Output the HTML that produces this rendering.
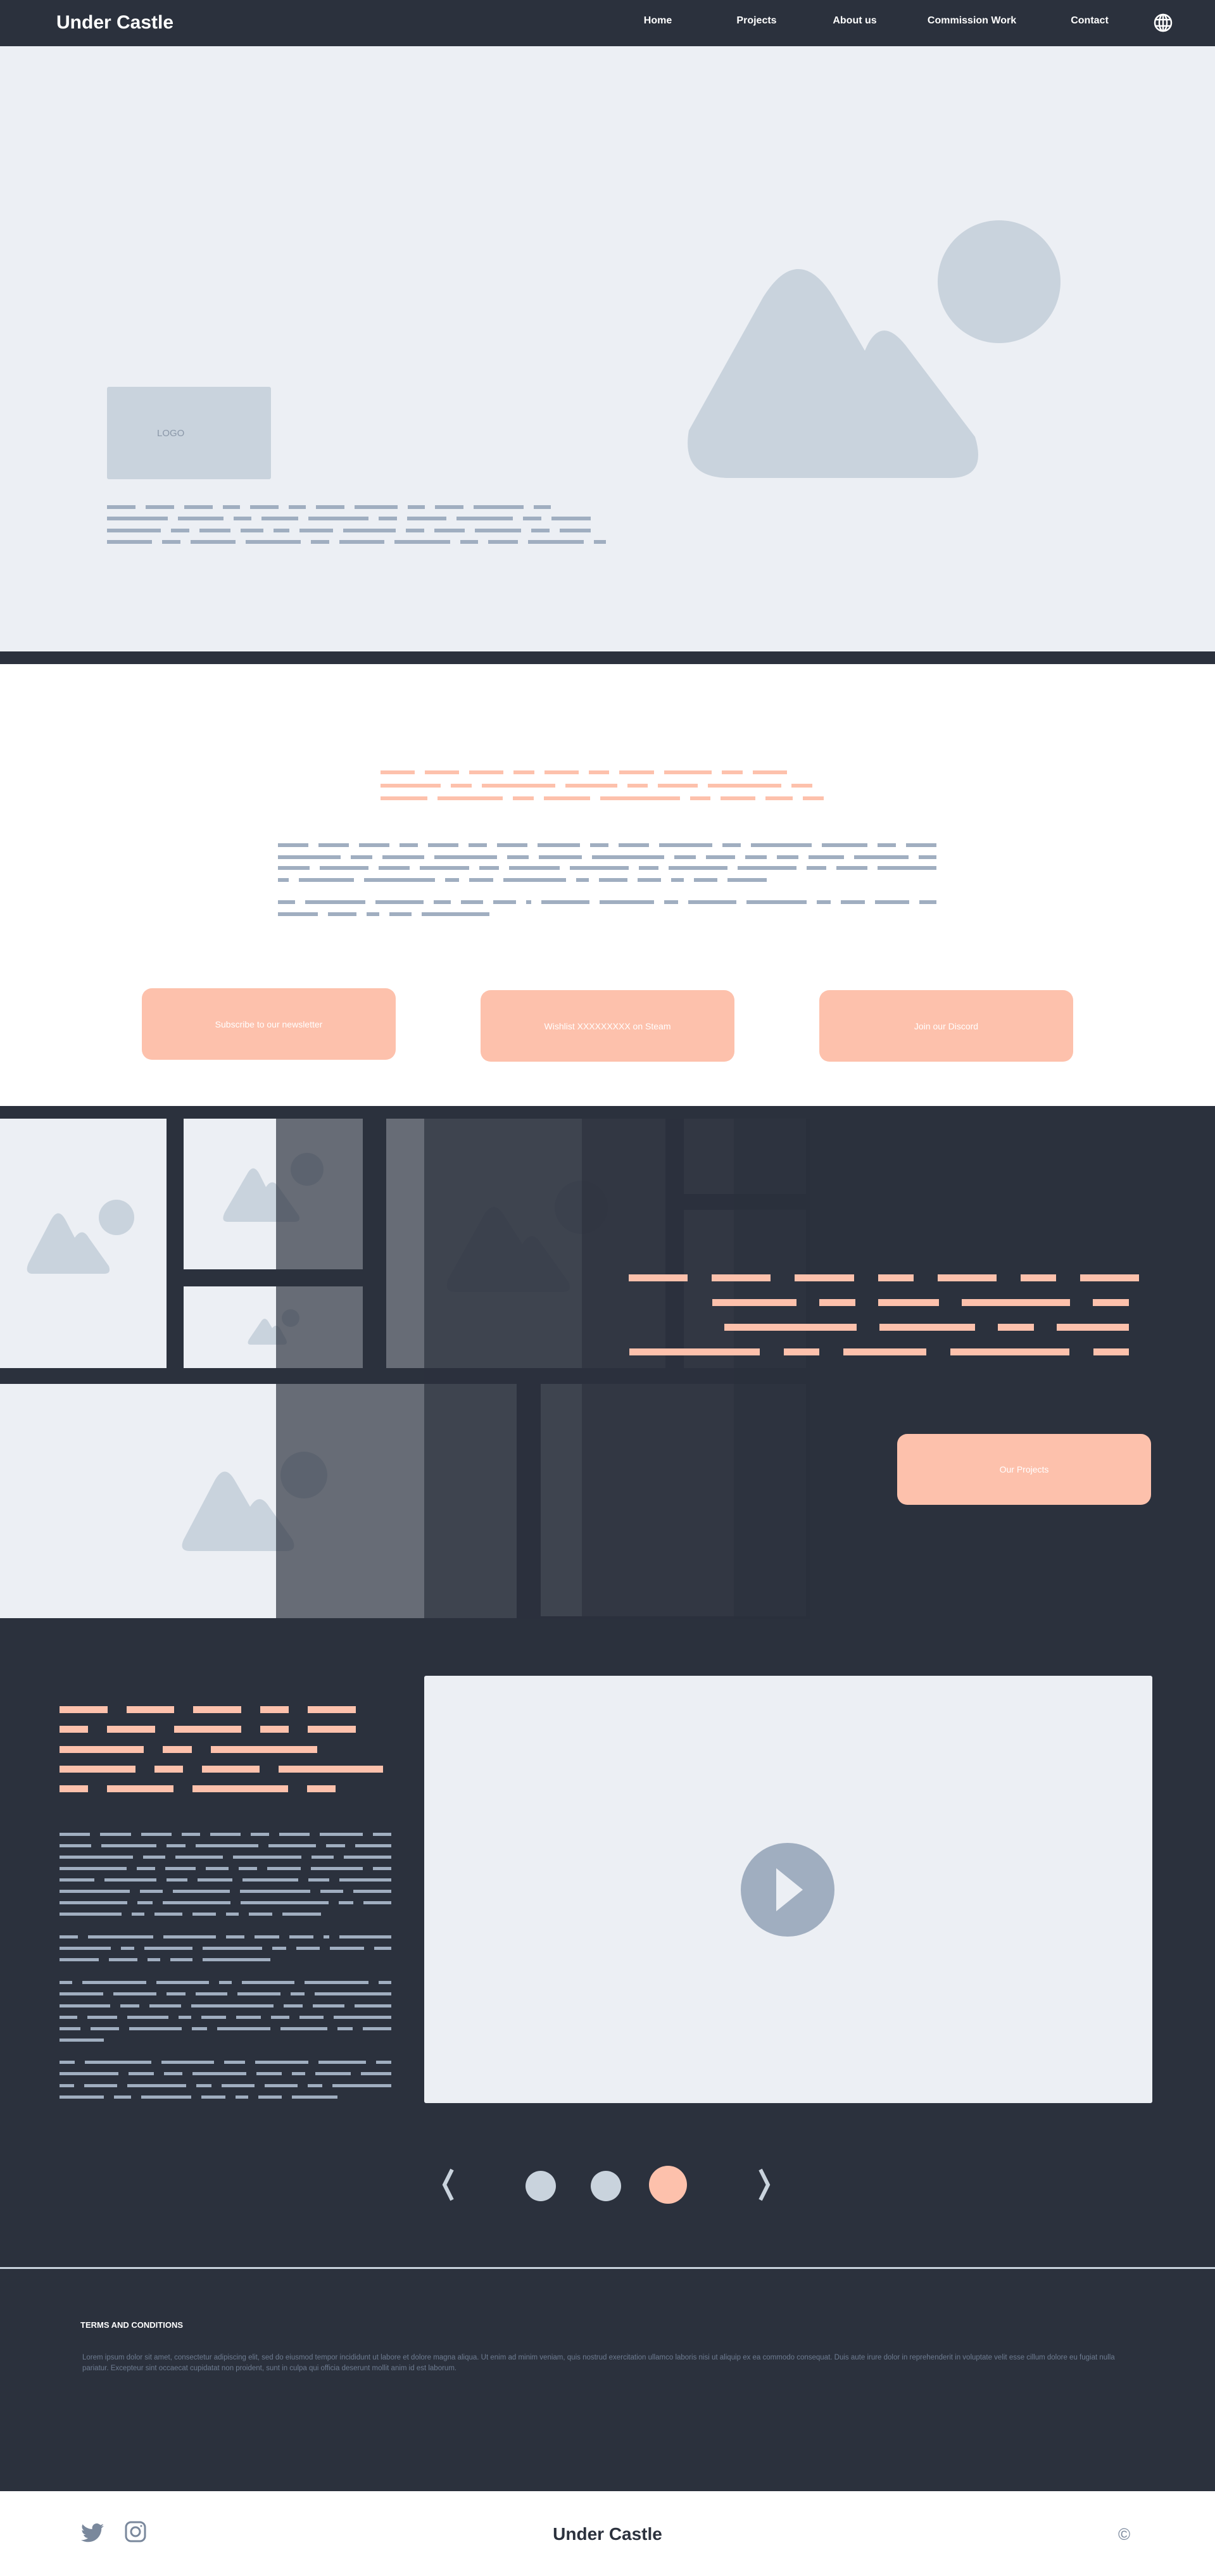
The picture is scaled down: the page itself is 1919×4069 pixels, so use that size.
<!DOCTYPE html>
<html><head><meta charset="utf-8"><style>
*{margin:0;padding:0;box-sizing:border-box}
body{width:1919px;height:4069px;position:relative;background:#2b313d;font-family:"Liberation Sans",sans-serif;overflow:hidden}
.a{position:absolute}
.ln{position:absolute;display:flex;gap:16px}
.ln i{display:block;height:100%;flex:1}
.g i{background:#a0aec0}.s i{background:#fdc1ac}
.btn{position:absolute;background:#fdc1ac;border-radius:16px;color:#fff;font-size:14px;display:flex;align-items:center;justify-content:center}
.nav{position:absolute;top:24px;color:#fff;font-weight:bold;font-size:16px;transform:translateX(-50%)}
</style></head><body>
<!-- nav -->
<div class="a" style="left:0;top:0;width:1919px;height:73px;background:#2b313d"></div>
<div class="a" style="left:89px;top:19px;color:#fff;font-weight:bold;font-size:30px">Under Castle</div>
<div class="nav" style="left:1039px">Home</div>
<div class="nav" style="left:1195px">Projects</div>
<div class="nav" style="left:1350px">About us</div>
<div class="nav" style="left:1535px">Commission Work</div>
<div class="nav" style="left:1721px">Contact</div>
<svg class="a" style="left:1821px;top:20px" width="32" height="32" viewBox="0 0 32 32" fill="none" stroke="#fff" stroke-width="2.5"><circle cx="16" cy="16" r="13"/><ellipse cx="16" cy="16" rx="6" ry="13"/><line x1="3" y1="11" x2="29" y2="11"/><line x1="3" y1="21" x2="29" y2="21"/><line x1="16" y1="3" x2="16" y2="29"/></svg>
<!-- hero -->
<div class="a" style="left:0;top:73px;width:1919px;height:956px;background:#eceff4"></div>
<div class="a" style="left:169px;top:611px;width:259px;height:146px;background:#c9d3dd;border-radius:3px"></div>
<div class="a" style="left:248px;top:676px;color:#8a97a8;font-size:15px">LOGO</div>
<svg class="a" style="left:0;top:0" width="1919" height="1029"><circle cx="1578" cy="445" r="97" fill="#c9d3dd"/><path d="M1152 755 Q1075 755 1088 680 L1205 470 Q1261 380 1317 470 L1366 554 Q1390 495 1430 545 L1540 690 Q1560 755 1500 755 Z" fill="#c9d3dd"/></svg>
<div class="ln g" style="left:169px;top:798px;width:701px;height:6px"><i style="flex:2"></i><i style="flex:2"></i><i style="flex:2"></i><i style="flex:1.2"></i><i style="flex:2"></i><i style="flex:1.2"></i><i style="flex:2"></i><i style="flex:3"></i><i style="flex:1.2"></i><i style="flex:2"></i><i style="flex:3.5"></i><i style="flex:1.2"></i></div>
<div class="ln g" style="left:169px;top:816px;width:764px;height:6px"><i style="flex:4"></i><i style="flex:3"></i><i style="flex:1.2"></i><i style="flex:2.4"></i><i style="flex:4"></i><i style="flex:1.2"></i><i style="flex:2.6"></i><i style="flex:3.7"></i><i style="flex:1.2"></i><i style="flex:2.6"></i></div>
<div class="ln g" style="left:169px;top:835px;width:764px;height:6px"><i style="flex:3.5"></i><i style="flex:1.2"></i><i style="flex:2"></i><i style="flex:1.5"></i><i style="flex:1"></i><i style="flex:2.2"></i><i style="flex:3.4"></i><i style="flex:1.2"></i><i style="flex:2"></i><i style="flex:3"></i><i style="flex:1.2"></i><i style="flex:2"></i></div>
<div class="ln g" style="left:169px;top:853px;width:788px;height:6px"><i style="flex:3"></i><i style="flex:1.2"></i><i style="flex:3"></i><i style="flex:3.7"></i><i style="flex:1.2"></i><i style="flex:3"></i><i style="flex:3.7"></i><i style="flex:1.2"></i><i style="flex:2"></i><i style="flex:3.7"></i><i style="flex:.8"></i></div>
<!-- white section -->
<div class="a" style="left:0;top:1049px;width:1919px;height:698px;background:#fff"></div>
<div class="ln s" style="left:601px;top:1217px;width:642px;height:6px"><i style="flex:2"></i><i style="flex:2"></i><i style="flex:2"></i><i style="flex:1.2"></i><i style="flex:2"></i><i style="flex:1.2"></i><i style="flex:2"></i><i style="flex:2.8"></i><i style="flex:1.2"></i><i style="flex:2"></i></div>
<div class="ln s" style="left:601px;top:1238px;width:682px;height:6px"><i style="flex:3.5"></i><i style="flex:1.2"></i><i style="flex:4.3"></i><i style="flex:3"></i><i style="flex:1.2"></i><i style="flex:2.3"></i><i style="flex:4.3"></i><i style="flex:1.2"></i></div>
<div class="ln s" style="left:601px;top:1258px;width:700px;height:6px"><i style="flex:2.7"></i><i style="flex:3.8"></i><i style="flex:1.2"></i><i style="flex:2.7"></i><i style="flex:4.6"></i><i style="flex:1.2"></i><i style="flex:2"></i><i style="flex:1.6"></i><i style="flex:1.2"></i></div>
<div class="ln g" style="left:439px;top:1332px;width:1040px;height:6px"><i style="flex:2"></i><i style="flex:2"></i><i style="flex:2"></i><i style="flex:1.2"></i><i style="flex:2"></i><i style="flex:1.2"></i><i style="flex:2"></i><i style="flex:2.8"></i><i style="flex:1.2"></i><i style="flex:2"></i><i style="flex:3.5"></i><i style="flex:1.2"></i><i style="flex:4"></i><i style="flex:3"></i><i style="flex:1.2"></i><i style="flex:2"></i></div>
<div class="ln g" style="left:439px;top:1351px;width:1040px;height:6px"><i style="flex:3.5"></i><i style="flex:1.2"></i><i style="flex:2.3"></i><i style="flex:3.5"></i><i style="flex:1.2"></i><i style="flex:2.4"></i><i style="flex:4"></i><i style="flex:1.2"></i><i style="flex:1.6"></i><i style="flex:1.2"></i><i style="flex:1.2"></i><i style="flex:2"></i><i style="flex:3"></i><i style="flex:1"></i></div>
<div class="ln g" style="left:439px;top:1368px;width:1040px;height:6px"><i style="flex:1.6"></i><i style="flex:2.5"></i><i style="flex:1.6"></i><i style="flex:2.5"></i><i style="flex:1"></i><i style="flex:2.6"></i><i style="flex:3"></i><i style="flex:1"></i><i style="flex:3"></i><i style="flex:3"></i><i style="flex:1"></i><i style="flex:1.6"></i><i style="flex:3"></i></div>
<div class="ln g" style="left:439px;top:1387px;width:772px;height:6px"><i style="flex:.7"></i><i style="flex:3.5"></i><i style="flex:4.5"></i><i style="flex:.9"></i><i style="flex:1.5"></i><i style="flex:4"></i><i style="flex:.8"></i><i style="flex:1.8"></i><i style="flex:1.5"></i><i style="flex:.8"></i><i style="flex:1.5"></i><i style="flex:2.5"></i></div>
<div class="ln g" style="left:439px;top:1422px;width:1040px;height:6px"><i style="flex:1"></i><i style="flex:3.5"></i><i style="flex:2.8"></i><i style="flex:1"></i><i style="flex:1.3"></i><i style="flex:1.3"></i><i style="flex:.3"></i><i style="flex:2.8"></i><i style="flex:3.2"></i><i style="flex:.8"></i><i style="flex:2.8"></i><i style="flex:3.5"></i><i style="flex:.8"></i><i style="flex:1.4"></i><i style="flex:2"></i><i style="flex:1"></i></div>
<div class="ln g" style="left:439px;top:1441px;width:334px;height:6px"><i style="flex:2.5"></i><i style="flex:1.8"></i><i style="flex:.8"></i><i style="flex:1.4"></i><i style="flex:4.3"></i></div>
<div class="btn" style="left:224px;top:1561px;width:401px;height:113px">Subscribe to our newsletter</div>
<div class="btn" style="left:759px;top:1564px;width:401px;height:113px">Wishlist XXXXXXXXX on Steam</div>
<div class="btn" style="left:1294px;top:1564px;width:401px;height:113px">Join our Discord</div>
<!-- gallery -->
<svg class="a" style="left:0;top:1747px" width="1919" height="840" viewBox="0 1747 1919 840">
<g fill="#eceff4">
<rect x="0" y="1767" width="263" height="394"/>
<rect x="290" y="1767" width="283" height="238"/>
<rect x="290" y="2032" width="283" height="129"/>
<rect x="610" y="1767" width="441" height="394"/>
<rect x="1080" y="1767" width="193" height="119"/>
<rect x="1080" y="1911" width="193" height="250"/>
<rect x="0" y="2186" width="816" height="370"/>
<rect x="854" y="2186" width="419" height="367"/>
</g>
<g fill="#c9d3dd">
<circle cx="184" cy="1923" r="28"/><path d="M52 2012 Q38 2012 45 1995 L80 1928 Q92 1905 104 1928 L118 1955 Q130 1938 140 1955 L172 2000 Q176 2012 165 2012Z"/>
<circle cx="485" cy="1847" r="26"/><path d="M360 1930 Q348 1930 355 1915 L390 1855 Q400 1836 410 1855 L420 1875 Q430 1860 440 1875 L472 1920 Q476 1930 465 1930Z"/>
<circle cx="459" cy="2082" r="14"/><path d="M396 2124 Q389 2124 393 2116 L412 2088 Q418 2078 424 2088 L430 2098 Q436 2090 442 2098 L452 2116 Q455 2124 448 2124Z"/>
<circle cx="918" cy="1907" r="42"/><path d="M720 2041 Q700 2041 708 2020 L765 1918 Q780 1895 795 1918 L825 1965 Q840 1940 855 1965 L898 2025 Q905 2041 888 2041Z"/>
<circle cx="480" cy="2330" r="37"/><path d="M300 2450 Q282 2450 290 2432 L340 2337 Q355 2312 370 2337 L395 2380 Q410 2356 425 2380 L462 2432 Q470 2450 452 2450Z"/>
</g>
<g fill="#2b313d">
<rect x="436" y="1767" width="234" height="790" opacity=".69"/>
<rect x="670" y="1767" width="249" height="790" opacity=".9"/>
<rect x="919" y="1767" width="240" height="790" opacity=".97"/>
<rect x="1159" y="1767" width="120" height="790" opacity=".99"/>
</g>
</svg>
<div class="ln s" style="left:993px;top:2013px;width:806px;height:11px;gap:38px"><i style="flex:2"></i><i style="flex:2"></i><i style="flex:2"></i><i style="flex:1.2"></i><i style="flex:2"></i><i style="flex:1.2"></i><i style="flex:2"></i></div>
<div class="ln s" style="left:1125px;top:2052px;width:658px;height:11px;gap:36px"><i style="flex:2.8"></i><i style="flex:1.2"></i><i style="flex:2"></i><i style="flex:3.6"></i><i style="flex:1.2"></i></div>
<div class="ln s" style="left:1144px;top:2091px;width:639px;height:11px;gap:36px"><i style="flex:4.4"></i><i style="flex:3.2"></i><i style="flex:1.2"></i><i style="flex:2.4"></i></div>
<div class="ln s" style="left:994px;top:2130px;width:789px;height:11px;gap:38px"><i style="flex:4.4"></i><i style="flex:1.2"></i><i style="flex:2.8"></i><i style="flex:4"></i><i style="flex:1.2"></i></div>
<div class="btn" style="left:1417px;top:2265px;width:401px;height:112px">Our Projects</div>
<!-- video section -->
<div class="a" style="left:670px;top:2647px;width:1150px;height:675px;background:#eceff4;border-radius:3px"></div>
<svg class="a" style="left:1168px;top:2909px" width="152" height="152"><circle cx="76" cy="76" r="74" fill="#a0aec0"/><path d="M58 42 L100 76 L58 110Z" fill="#eceff4"/></svg>
<div class="ln s" style="left:94px;top:2695px;width:468px;height:11px;gap:30px"><i style="flex:2"></i><i style="flex:2"></i><i style="flex:2"></i><i style="flex:1.2"></i><i style="flex:2"></i></div>
<div class="ln s" style="left:94px;top:2726px;width:468px;height:11px;gap:30px"><i style="flex:1.2"></i><i style="flex:2"></i><i style="flex:2.8"></i><i style="flex:1.2"></i><i style="flex:2"></i></div>
<div class="ln s" style="left:94px;top:2758px;width:407px;height:11px;gap:30px"><i style="flex:3.5"></i><i style="flex:1.2"></i><i style="flex:4.4"></i></div>
<div class="ln s" style="left:94px;top:2789px;width:511px;height:11px;gap:30px"><i style="flex:3.2"></i><i style="flex:1.2"></i><i style="flex:2.4"></i><i style="flex:4.4"></i></div>
<div class="ln s" style="left:94px;top:2820px;width:436px;height:11px;gap:30px"><i style="flex:1.2"></i><i style="flex:2.8"></i><i style="flex:4"></i><i style="flex:1.2"></i></div>
<div id="para"></div>
<div class="ln g" style="left:94px;top:2895px;width:524px;height:5px"><i style="flex:2"></i><i style="flex:2"></i><i style="flex:2"></i><i style="flex:1.2"></i><i style="flex:2"></i><i style="flex:1.2"></i><i style="flex:2"></i><i style="flex:2.8"></i><i style="flex:1.2"></i></div>
<div class="ln g" style="left:94px;top:2913px;width:524px;height:5px"><i style="flex:2"></i><i style="flex:3.5"></i><i style="flex:1.2"></i><i style="flex:4"></i><i style="flex:3"></i><i style="flex:1.2"></i><i style="flex:2.3"></i></div>
<div class="ln g" style="left:94px;top:2931px;width:524px;height:5px"><i style="flex:4"></i><i style="flex:1.2"></i><i style="flex:2.6"></i><i style="flex:3.7"></i><i style="flex:1.2"></i><i style="flex:2.6"></i></div>
<div class="ln g" style="left:94px;top:2949px;width:524px;height:5px"><i style="flex:4.4"></i><i style="flex:1.2"></i><i style="flex:2"></i><i style="flex:1.5"></i><i style="flex:1.2"></i><i style="flex:2.2"></i><i style="flex:3.4"></i><i style="flex:1.2"></i></div>
<div class="ln g" style="left:94px;top:2967px;width:524px;height:5px"><i style="flex:2"></i><i style="flex:3"></i><i style="flex:1.2"></i><i style="flex:2"></i><i style="flex:3.2"></i><i style="flex:1.2"></i><i style="flex:3"></i></div>
<div class="ln g" style="left:94px;top:2985px;width:524px;height:5px"><i style="flex:3.7"></i><i style="flex:1.2"></i><i style="flex:3"></i><i style="flex:3.7"></i><i style="flex:1.2"></i><i style="flex:2"></i></div>
<div class="ln g" style="left:94px;top:3003px;width:524px;height:5px"><i style="flex:3.7"></i><i style="flex:.8"></i><i style="flex:3.7"></i><i style="flex:4.8"></i><i style="flex:.8"></i><i style="flex:1.5"></i></div>
<div class="ln g" style="left:94px;top:3021px;width:413px;height:5px"><i style="flex:4"></i><i style="flex:.8"></i><i style="flex:1.8"></i><i style="flex:1.5"></i><i style="flex:.8"></i><i style="flex:1.5"></i><i style="flex:2.5"></i></div>
<div class="ln g" style="left:94px;top:3057px;width:524px;height:5px"><i style="flex:1"></i><i style="flex:3.5"></i><i style="flex:2.8"></i><i style="flex:1"></i><i style="flex:1.3"></i><i style="flex:1.3"></i><i style="flex:.3"></i><i style="flex:2.8"></i></div>
<div class="ln g" style="left:94px;top:3075px;width:524px;height:5px"><i style="flex:3"></i><i style="flex:.8"></i><i style="flex:2.8"></i><i style="flex:3.5"></i><i style="flex:.8"></i><i style="flex:1.4"></i><i style="flex:2"></i><i style="flex:1"></i></div>
<div class="ln g" style="left:94px;top:3093px;width:333px;height:5px"><i style="flex:2.5"></i><i style="flex:1.8"></i><i style="flex:.8"></i><i style="flex:1.4"></i><i style="flex:4.3"></i></div>
<div class="ln g" style="left:94px;top:3129px;width:524px;height:5px"><i style="flex:.8"></i><i style="flex:4"></i><i style="flex:3.3"></i><i style="flex:.8"></i><i style="flex:3.3"></i><i style="flex:4"></i><i style="flex:.8"></i></div>
<div class="ln g" style="left:94px;top:3147px;width:524px;height:5px"><i style="flex:2.5"></i><i style="flex:2.5"></i><i style="flex:1.1"></i><i style="flex:1.8"></i><i style="flex:2.5"></i><i style="flex:.8"></i><i style="flex:4.4"></i></div>
<div class="ln g" style="left:94px;top:3166px;width:524px;height:5px"><i style="flex:2.9"></i><i style="flex:1.1"></i><i style="flex:1.8"></i><i style="flex:4.7"></i><i style="flex:1.1"></i><i style="flex:1.8"></i><i style="flex:2.1"></i></div>
<div class="ln g" style="left:94px;top:3184px;width:524px;height:5px"><i style="flex:1.1"></i><i style="flex:1.8"></i><i style="flex:2.5"></i><i style="flex:.8"></i><i style="flex:1.5"></i><i style="flex:1.5"></i><i style="flex:1.1"></i><i style="flex:1.5"></i><i style="flex:3.5"></i></div>
<div class="ln g" style="left:94px;top:3202px;width:524px;height:5px"><i style="flex:1.1"></i><i style="flex:1.5"></i><i style="flex:2.8"></i><i style="flex:.8"></i><i style="flex:2.8"></i><i style="flex:2.5"></i><i style="flex:.8"></i><i style="flex:1.5"></i></div>
<div class="a" style="left:94px;top:3220px;width:70px;height:5px;background:#a0aec0"></div>
<div class="ln g" style="left:94px;top:3255px;width:524px;height:5px"><i style="flex:.8"></i><i style="flex:3.5"></i><i style="flex:2.8"></i><i style="flex:1.1"></i><i style="flex:2.8"></i><i style="flex:2.5"></i><i style="flex:.8"></i></div>
<div class="ln g" style="left:94px;top:3273px;width:524px;height:5px"><i style="flex:3.5"></i><i style="flex:1.5"></i><i style="flex:1.1"></i><i style="flex:3.2"></i><i style="flex:1.5"></i><i style="flex:.8"></i><i style="flex:2.1"></i><i style="flex:1.8"></i></div>
<div class="ln g" style="left:94px;top:3292px;width:524px;height:5px"><i style="flex:.8"></i><i style="flex:1.8"></i><i style="flex:3.2"></i><i style="flex:.8"></i><i style="flex:1.8"></i><i style="flex:1.8"></i><i style="flex:.8"></i><i style="flex:3.2"></i></div>
<div class="ln g" style="left:94px;top:3310px;width:439px;height:5px"><i style="flex:2.8"></i><i style="flex:1.1"></i><i style="flex:3.2"></i><i style="flex:1.5"></i><i style="flex:.8"></i><i style="flex:1.5"></i><i style="flex:2.9"></i></div>
<!-- carousel -->
<svg class="a" style="left:680px;top:3415px" width="560" height="72" fill="none" stroke="#c9d3dd" stroke-width="6"><path d="M34 12 L22 36 L34 60"/><path d="M521 12 L533 36 L521 60"/><circle cx="174" cy="38" r="24" fill="#c9d3dd" stroke="none"/><circle cx="277" cy="38" r="24" fill="#c9d3dd" stroke="none"/><circle cx="375" cy="36" r="30" fill="#fdc1ac" stroke="none"/></svg>
<!-- terms -->
<div class="a" style="left:0;top:3581px;width:1919px;height:3px;background:#c9d3dd"></div>
<div class="a" style="left:127px;top:3665px;color:#fff;font-weight:bold;font-size:13px">TERMS AND CONDITIONS</div>
<div class="a" style="left:130px;top:3716px;width:1660px;color:#6e7c91;font-size:11.5px;line-height:17px">Lorem ipsum dolor sit amet, consectetur adipiscing elit, sed do eiusmod tempor incididunt ut labore et dolore magna aliqua. Ut enim ad minim veniam, quis nostrud exercitation ullamco laboris nisi ut aliquip ex ea commodo consequat. Duis aute irure dolor in reprehenderit in voluptate velit esse cillum dolore eu fugiat nulla pariatur. Excepteur sint occaecat cupidatat non proident, sunt in culpa qui officia deserunt mollit anim id est laborum.</div>
<!-- footer -->
<div class="a" style="left:0;top:3935px;width:1919px;height:134px;background:#fff"></div>
<svg class="a" style="left:128px;top:3985px" width="36" height="32" viewBox="0 0 24 20"><path fill="#7a889c" d="M24 2.4c-.9.4-1.8.7-2.8.8 1-.6 1.8-1.6 2.2-2.7-1 .6-2 1-3.1 1.2C19.3.7 18 0 16.6 0c-2.7 0-4.9 2.2-4.9 4.9 0 .4 0 .8.1 1.1C7.7 5.8 4.1 3.9 1.7.9c-.4.7-.7 1.6-.7 2.5 0 1.7.9 3.2 2.2 4.1-.8 0-1.6-.2-2.2-.6v.1c0 2.4 1.7 4.4 3.9 4.8-.4.1-.8.2-1.3.2-.3 0-.6 0-.9-.1.6 2 2.4 3.4 4.6 3.4-1.7 1.3-3.8 2.1-6.1 2.1-.4 0-.8 0-1.2-.1 2.2 1.4 4.8 2.2 7.5 2.2 9.1 0 14-7.5 14-14v-.6c1-.7 1.8-1.6 2.5-2.5z"/></svg>
<svg class="a" style="left:196px;top:3981px" width="36" height="36" viewBox="0 0 36 36" fill="none" stroke="#7a889c" stroke-width="3"><rect x="3" y="3" width="30" height="30" rx="8"/><circle cx="18" cy="18" r="7"/><circle cx="27" cy="9" r="1.5" fill="#7a889c" stroke="none"/></svg>
<div class="a" style="left:0;top:3987px;width:1919px;text-align:center;color:#2b313d;font-weight:bold;font-size:28px">Under Castle</div>
<div class="a" style="left:1766px;top:3988px;color:#7a889c;font-size:26px">©</div>
</body></html>
